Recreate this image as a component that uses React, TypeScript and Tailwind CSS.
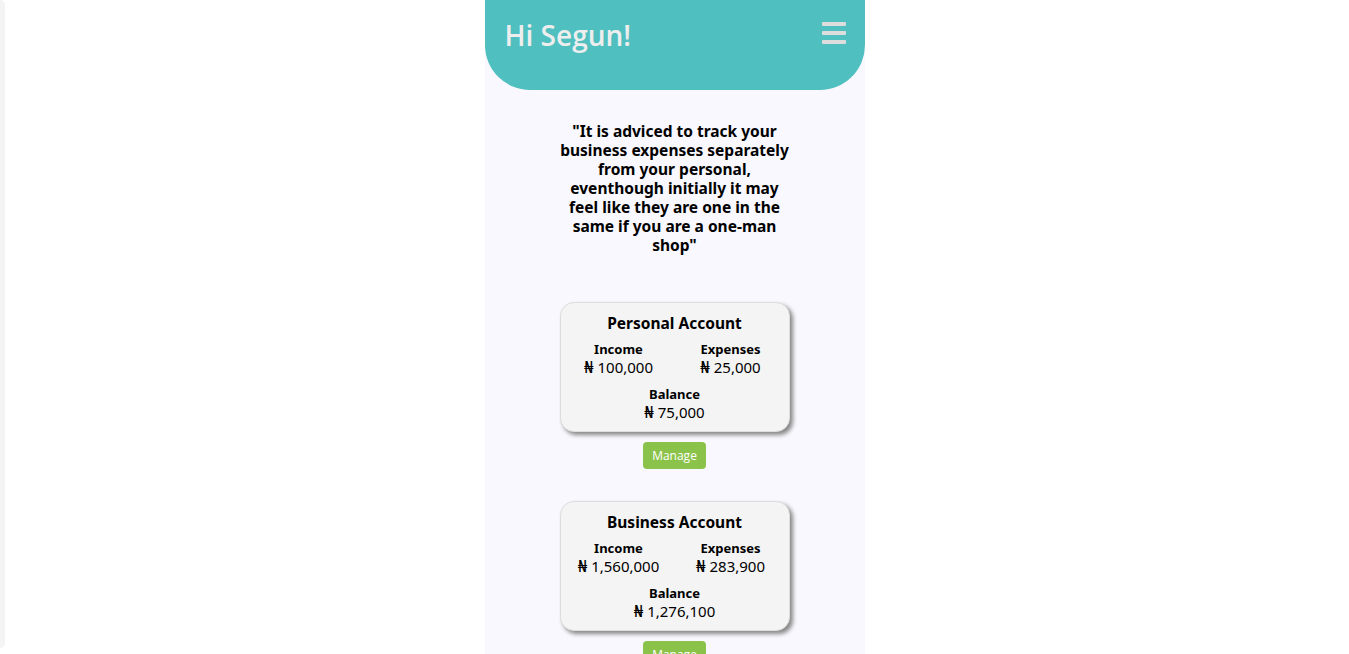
const accounts = [
    { title: "Personal Account", income: "100,000", expenses: "25,000", balance: "75,000" },
    { title: "Business Account", income: "1,560,000", expenses: "283,900", balance: "1,276,100" },
];

const Stat = ({ label, value }: { label: string; value: string }) => (
    <div className="flex flex-col items-center">
        <span className="text-[13px] font-bold leading-[17px]">{label}</span>
        <span className="text-[15px] leading-[19px]">
            <span style={{ fontFamily: "'DejaVu Sans', sans-serif" }}>₦</span> {value}
        </span>
    </div>
);

const App = () => {
    return (
        <div className="min-h-screen bg-white flex justify-center relative" style={{ fontFamily: "'Noto Sans', sans-serif" }}>
            {/* left strip */}
            <div className="absolute left-0 top-0 w-[5px] h-[648px] bg-[#f4f4f4] rounded-r-md" />

            <div className="w-[380px] min-h-[654px] bg-[#f8f8fe] flex flex-col items-center">
                {/* Header */}
                <div className="w-full h-[90px] bg-[#50bfc0] rounded-b-[45px] flex items-start justify-between px-5 pt-[15px]">
                    <h1 className="text-[28px] font-semibold text-[#eeeeee] leading-[40px]" style={{ fontFamily: "'Open Sans', sans-serif" }}>Hi Segun!</h1>
                    <div className="flex flex-col gap-[5px] mt-[7px] mr-[-1px]">
                        <span className="block w-[24px] h-[4px] bg-[#dddddd] rounded-[1px]" />
                        <span className="block w-[24px] h-[4px] bg-[#dddddd] rounded-[1px]" />
                        <span className="block w-[24px] h-[4px] bg-[#dddddd] rounded-[1px]" />
                    </div>
                </div>

                {/* Quote */}
                <p className="w-[240px] mt-[32px] text-center text-[15.5px] font-bold leading-[19px] text-black">
                    "It is adviced to track your business expenses separately from your personal, eventhough initially it may feel like they are one in the same if you are a one-man shop"
                </p>

                {/* Accounts */}
                <div className="mt-[47px] flex flex-col items-center gap-[32px]">
                    {accounts.map((acc) => (
                        <div key={acc.title} className="flex flex-col items-center">
                            <div className="w-[230px] h-[130px] bg-[#f4f4f4] border border-[#dddddd] rounded-[14px] shadow-[3px_3px_4px_#888888] flex flex-col items-center pt-[10px] text-black">
                                <h2 className="text-[15.5px] font-bold leading-[20px]">{acc.title}</h2>
                                <div className="w-full grid grid-cols-2 mt-[8px] px-[2px]">
                                    <Stat label="Income" value={acc.income} />
                                    <Stat label="Expenses" value={acc.expenses} />
                                </div>
                                <div className="mt-[8px]">
                                    <Stat label="Balance" value={acc.balance} />
                                </div>
                            </div>
                            <button className="mt-[10px] w-[63px] h-[27px] bg-[#8bc34a] rounded-[4px] text-white text-[12px]" style={{ fontFamily: "'Open Sans', sans-serif" }}>
                                Manage
                            </button>
                        </div>
                    ))}
                </div>
            </div>
        </div>
    );
};

export default App;
